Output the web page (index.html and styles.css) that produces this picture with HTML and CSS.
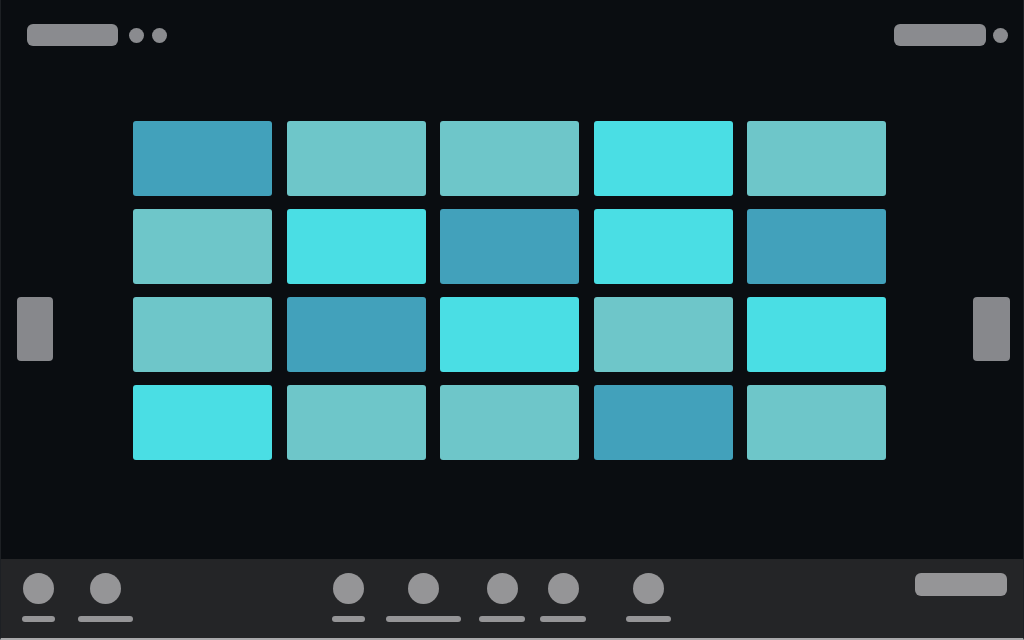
FILE: index.html
```html
<!DOCTYPE html>
<html lang="en">
<head>
<meta charset="UTF-8">
<meta name="viewport" content="width=device-width, initial-scale=1.0">
<title>Pad Board</title>
<link rel="stylesheet" href="styles.css">
</head>
<body>
<div class="app">
    <div class="main">
        <div class="topbar">
            <div class="pill"></div>
            <div class="dot dot-first"></div>
            <div class="dot dot-second"></div>
            <div class="pill pill-right"></div>
            <div class="dot dot-right"></div>
        </div>
        <div class="stage">
            <div class="side side-left"></div>
            <div class="pads">
                <div class="pad deep"></div>
                <div class="pad soft"></div>
                <div class="pad soft"></div>
                <div class="pad bright"></div>
                <div class="pad soft"></div>

                <div class="pad soft"></div>
                <div class="pad bright"></div>
                <div class="pad deep"></div>
                <div class="pad bright"></div>
                <div class="pad deep"></div>

                <div class="pad soft"></div>
                <div class="pad deep"></div>
                <div class="pad bright"></div>
                <div class="pad soft"></div>
                <div class="pad bright"></div>

                <div class="pad bright"></div>
                <div class="pad soft"></div>
                <div class="pad soft"></div>
                <div class="pad deep"></div>
                <div class="pad soft"></div>
            </div>
            <div class="side side-right"></div>
        </div>
    </div>
    <div class="dock">
        <div class="tool w33"><span class="knob"></span><span class="label"></span></div>
        <div class="tool w55 gap23"><span class="knob"></span><span class="label"></span></div>
        <div class="tool w33 gap199"><span class="knob"></span><span class="label"></span></div>
        <div class="tool w75 gap21"><span class="knob"></span><span class="label"></span></div>
        <div class="tool w46 gap18"><span class="knob"></span><span class="label"></span></div>
        <div class="tool w46 gap15"><span class="knob"></span><span class="label"></span></div>
        <div class="tool w45 gap40"><span class="knob"></span><span class="label"></span></div>
        <div class="dock-button"></div>
    </div>
</div>
</body>
</html>
```
FILE: styles.css
```css
html, body {
    margin: 0;
    padding: 0;
    background-color: #0a0d11;
}

.app {
    width: 1024px;
    height: 640px;
    box-sizing: border-box;
    border-left: 1px solid #1d2024;
    border-right: 1px solid #1d2024;
    border-bottom: 2px solid #a9a9ab;
    display: flex;
    flex-direction: column;
    overflow: hidden;
}

.main {
    height: 559px;
    display: flex;
    flex-direction: column;
}

.topbar {
    display: flex;
    align-items: center;
    padding: 24px 15px 0 26px;
    height: 22px;
}

.pill {
    width: 91px;
    height: 22px;
    border-radius: 6px;
    background-color: #8a8b8f;
}

.pill-right {
    width: 92px;
    margin-left: auto;
}

.dot {
    width: 15px;
    height: 15px;
    border-radius: 50%;
    background-color: #8a8b8f;
}

.dot-first { margin-left: 11px; }
.dot-second { margin-left: 8px; }
.dot-right { margin-left: 7px; }

.stage {
    display: flex;
    align-items: flex-start;
    padding-left: 16px;
    margin-top: 75px;
}

.side {
    width: 36px;
    height: 64px;
    margin-top: 176px;
    border-radius: 4px;
    background-color: #87888c;
}

.side-left { margin-right: 80px; }
.side-right { margin-left: 87px; width: 37px; }

.pads {
    width: 753px;
    display: grid;
    grid-template-columns: repeat(5, 139px);
    grid-auto-rows: 75px;
    column-gap: 14.5px;
    row-gap: 13px;
}

.pad {
    border-radius: 3px;
}

.deep { background-color: #42a1bb; }
.soft { background-color: #6ec6c9; }
.bright { background-color: #4adee4; }

.dock {
    flex: 1;
    display: flex;
    align-items: flex-start;
    padding: 14px 0 0 21px;
    background-color: #242527;
}

.tool {
    display: flex;
    flex-direction: column;
    align-items: center;
    gap: 12px;
}

.knob {
    width: 31px;
    height: 31px;
    border-radius: 50%;
    background-color: #959597;
}

.label {
    width: 100%;
    height: 6px;
    border-radius: 3px;
    background-color: #959597;
}

.w33 { width: 33px; }
.w45 { width: 45px; }
.w46 { width: 46px; }
.w55 { width: 55px; }
.w75 { width: 75px; }

.gap15 { margin-left: 15px; }
.gap18 { margin-left: 18px; }
.gap21 { margin-left: 21px; }
.gap23 { margin-left: 23px; }
.gap40 { margin-left: 40px; }
.gap199 { margin-left: 199px; }

.dock-button {
    width: 92px;
    height: 23px;
    margin-left: auto;
    margin-right: 16px;
    border-radius: 6px;
    background-color: #959597;
}
```
